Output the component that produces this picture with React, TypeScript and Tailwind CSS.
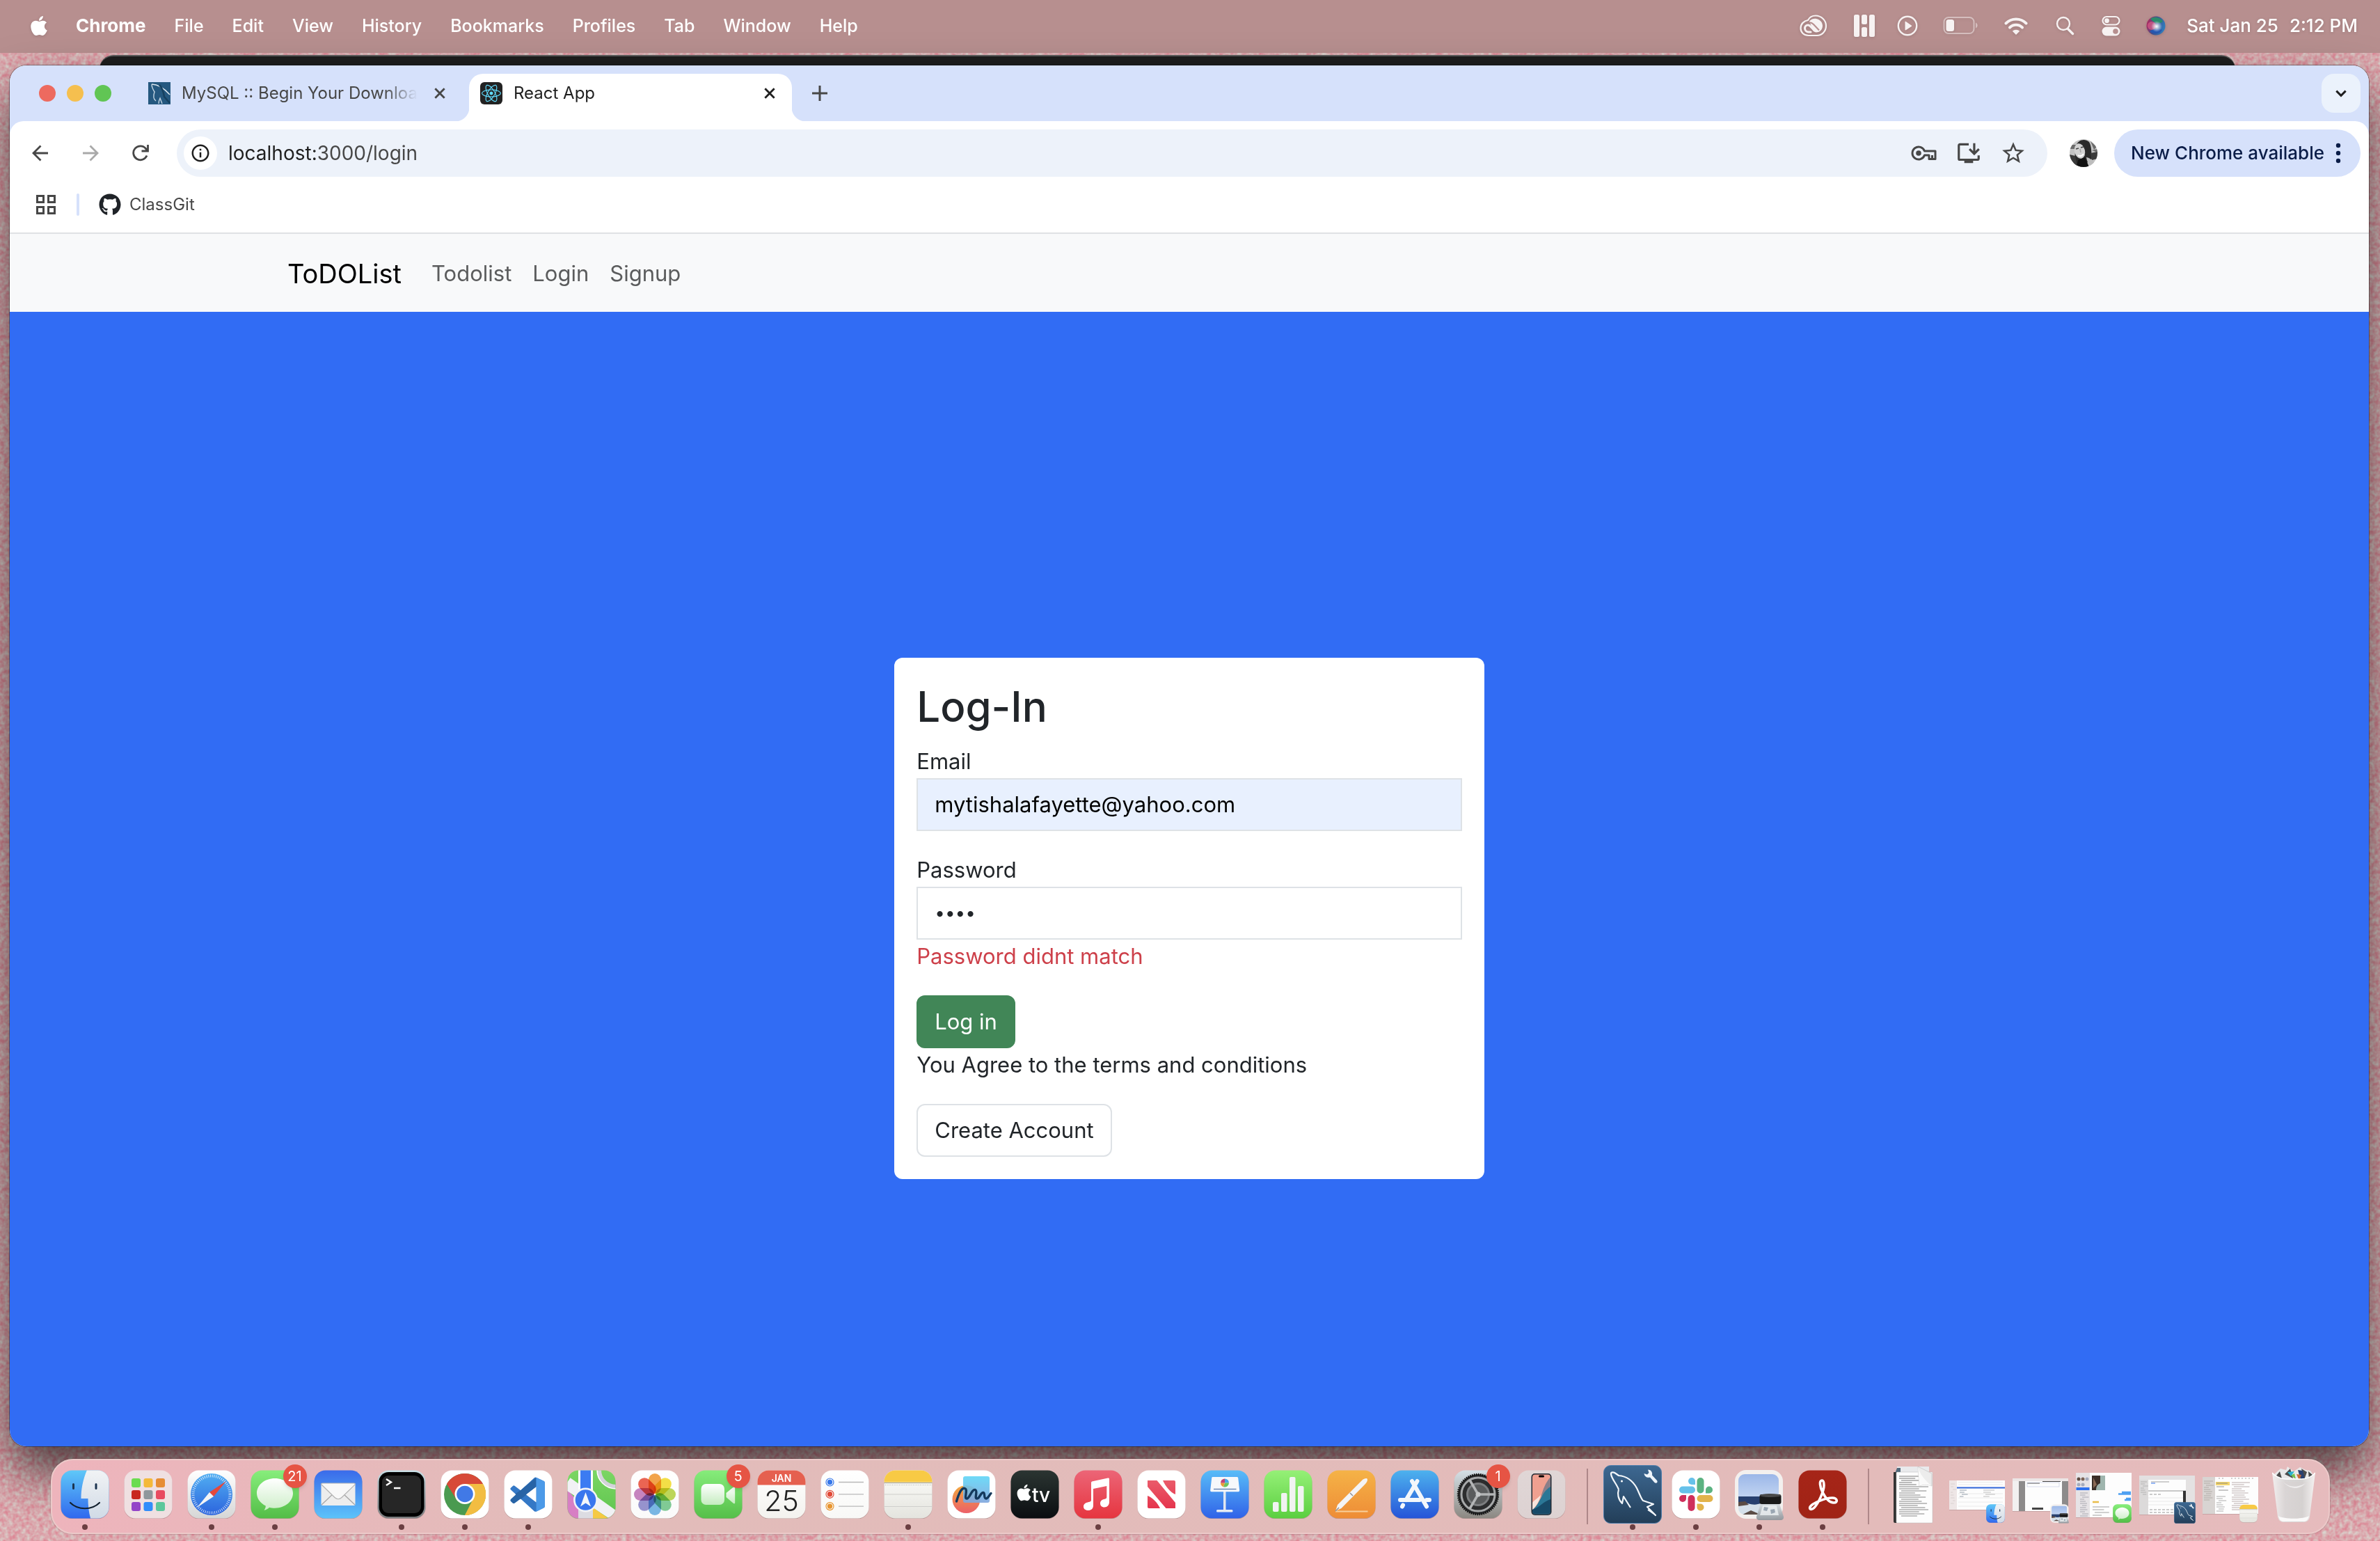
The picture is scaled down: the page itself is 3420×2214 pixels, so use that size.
import type { ReactNode, SVGProps } from "react";
import { FaApple, FaGithub, FaReact } from "react-icons/fa";
import { MdInstallDesktop, MdStarOutline, MdInfoOutline } from "react-icons/md";

type IconProps = SVGProps<SVGSVGElement>;

/* ---------- shared drawing helpers ---------- */

function Grad({ id, a, b }: { id: string; a: string; b: string }) {
  return (
    <linearGradient id={id} x1="0" y1="0" x2="0" y2="1">
      <stop offset="0" stopColor={a} />
      <stop offset="1" stopColor={b} />
    </linearGradient>
  );
}

function Tile({
  id,
  a,
  b,
  children,
  ...rest
}: IconProps & { id: string; a: string; b: string; children?: ReactNode }) {
  return (
    <svg viewBox="0 0 70 70" width="70" height="70" aria-hidden="true" {...rest}>
      <defs>
        <Grad id={id} a={a} b={b} />
        <clipPath id={id + "-clip"}>
          <rect x="0.5" y="0.5" width="69" height="69" rx="16" />
        </clipPath>
      </defs>
      <rect x="0.5" y="1.5" width="69" height="69" rx="16" fill="#000" opacity="0.18" />
      <rect x="0.5" y="0.5" width="69" height="69" rx="16" fill={`url(#${id})`} />
      <g clipPath={`url(#${id}-clip)`}>{children}</g>
    </svg>
  );
}

/* ---------- dock icons ---------- */

function Finder(p: IconProps) {
  return (
    <Tile id="finder" a="#5fc8f8" b="#3068ee" {...p}>
      <defs>
        <Grad id="finder-r" a="#f1f3f5" b="#d0dae6" />
      </defs>
      <path d="M38 0C32 14 29.500 28 29.500 41h10c0 10 1 20 4 30H70V0Z" fill="url(#finder-r)" />
      <path d="M18.500 20.500v6M51 20.500v6" stroke="#1c3450" strokeWidth="3" strokeLinecap="round" />
      <path d="M14 47c11 11 31 11 42 0" stroke="#12202e" strokeWidth="2.200" fill="none" strokeLinecap="round" />
    </Tile>
  );
}

const padColors = ["#6bdc50", "#f4b93a", "#e68d34", "#c8281f", "#8f979c", "#e84a60", "#9444c8", "#318dfa", "#5cc79c"];

function Launchpad() {
  return (
    <Tile id="launch" a="#efe0e2" b="#efe0e1">
      {padColors.map((c, i) => (
        <rect key={c} x={11 + (i % 3) * 17.5} y={12 + Math.floor(i / 3) * 17} width="13" height="13" rx="3" fill={c} />
      ))}
    </Tile>
  );
}

function Safari() {
  return (
    <Tile id="safari" a="#ffffff" b="#d6d6d6">
      <defs>
        <Grad id="safari-b" a="#51aef2" b="#2b63dd" />
      </defs>
      <circle cx="35" cy="35" r="30" fill="url(#safari-b)" />
      <circle cx="35" cy="35" r="26.500" fill="none" stroke="#fff" strokeOpacity="0.8" strokeWidth="4" strokeDasharray="0.9 1.875" />
      <path d="M56 16 32 32l6 6Z" fill="#e4483c" />
      <path d="M14 54l18-22 6 6Z" fill="#f3f4f6" />
    </Tile>
  );
}

function Messages(p: IconProps) {
  return (
    <Tile id="msg" a="#87ee7c" b="#53bd47" {...p}>
      <defs>
        <Grad id="msg-b" a="#ffffff" b="#cdeec8" />
      </defs>
      <path
        d="M35 12c14.500 0 26 9.400 26 21.300S49.500 54.700 35 54.700c-3 0-5.600-.3-8-1-2 2-4.500 3.500-7.500 4 1.500-1.700 2.300-4 2.300-6.200C14 47.700 9 41 9 33.300 9 21.400 20.500 12 35 12Z"
        fill="url(#msg-b)"
      />
    </Tile>
  );
}

function Mail() {
  return (
    <Tile id="mail" a="#3a6bea" b="#5cc3fa">
      <rect x="10.500" y="19" width="49" height="32" rx="2" fill="#ededed" />
      <path d="M11 50l18-17M59 50 41 33" stroke="#a9a9a9" strokeWidth="1.400" />
      <path d="M10.500 20.500 30 39.500c3 3 7 3 10 0l19.500-19c0-1-.8-1.500-1.800-1.500H12.300c-1 0-1.800.5-1.800 1.500Z" fill="#f8f8f8" stroke="#b3b3b3" strokeWidth="1.200" />
    </Tile>
  );
}

function Terminal() {
  return (
    <Tile id="term" a="#c8dfe6" b="#77797b">
      <rect x="2.500" y="3" width="65" height="64" rx="14" fill="#000" />
      <rect x="7" y="8" width="56" height="54" rx="9" fill="#262626" />
      <path d="M13 13l7 4.500-7 4.500M24 26h9.500" stroke="#fff" strokeWidth="2.400" fill="none" />
    </Tile>
  );
}

function ChromeIcon() {
  return (
    <Tile id="chrome" a="#fff" b="#fff">
      <circle cx="35" cy="35" r="30" fill="#4a9a50" />
      <path d="M35 35 23.300 41.800 9 20A30 30 0 0 1 61 20H35Z" fill="#d74a38" />
      <path d="M9 20 23 42.500 35 35V21.500Z" fill="#d74a38" />
      <path d="M61 20a30 30 0 0 1-26 45l13-23V20Z" fill="#f2bd42" />
      <path d="M35 20h26a30 30 0 0 1-26 45l11.700-23.300Z" fill="#f2bd42" />
      <circle cx="35" cy="34.500" r="14.500" fill="#fff" />
      <circle cx="35" cy="34.500" r="11.800" fill="#4179e6" />
    </Tile>
  );
}

const codePath =
  "M23.15 2.587L18.21.21a1.494 1.494 0 0 0-1.705.29l-9.46 8.63-4.12-3.128a.999.999 0 0 0-1.276.057L.327 7.261A1 1 0 0 0 .326 8.74L3.899 12 .326 15.26a1 1 0 0 0 .001 1.479L1.65 17.94a.999.999 0 0 0 1.276.057l4.12-3.128 9.46 8.63a1.492 1.492 0 0 0 1.704.29l4.942-2.377A1.5 1.5 0 0 0 24 20.06V3.939a1.5 1.5 0 0 0-.85-1.352zm-5.146 14.861L10.826 12l7.178-5.448v10.896z";

function VSCode() {
  return (
    <Tile id="vsc" a="#fff" b="#fff">
      <defs>
        <clipPath id="vsc-r">
          <rect x="18" y="0" width="6" height="24" />
        </clipPath>
        <clipPath id="vsc-t">
          <path d="M0 24V14L7 9l11-9v6.500L4 18Z" />
        </clipPath>
      </defs>
      <g transform="translate(9.500 10.500) scale(2.060)">
        <path d={codePath} fill="#3478c6" />
        <path d={codePath} fill="#2864a6" clipPath="url(#vsc-t)" />
        <path d={codePath} fill="#4c9ae8" clipPath="url(#vsc-r)" />
      </g>
    </Tile>
  );
}

function Maps() {
  return (
    <Tile id="maps" a="#7bd663" b="#5fc44f">
      <path d="M0 28 38 70H0Z" fill="#d77fc4" />
      <path d="M0 8 70 58v18L0 30Z" fill="#f1f1f5" />
      <path d="M37 70V54L60 70Z" fill="#f6c944" />
      <path d="M0 18 12 0H0Z" fill="#7bd663" />
      <path d="M16 40h21v32H16Z" fill="#dcdce2" />
      <path d="M16-2h21v34H16Z" fill="#fff" />
      <path d="M19-2h15v34H19Z" fill="#3b7bf2" />
      <circle cx="70" cy="0" r="24" fill="none" stroke="#d3d3da" strokeWidth="6" />
      <circle cx="70" cy="0" r="27" fill="none" stroke="#fff" strokeWidth="1.500" />
      <circle cx="26.500" cy="43" r="17.500" fill="#f1f3f6" />
      <circle cx="26.500" cy="43" r="14.800" fill="#3a76ee" />
      <path d="M26.500 32 34 52.500l-7.500-5-7.500 5Z" fill="#f4f6fa" />
    </Tile>
  );
}

const petals = ["#f19a37", "#f2dc33", "#b5d147", "#72c48a", "#6aaee0", "#8b87c8", "#c077b8", "#e85440"];

function Photos() {
  return (
    <Tile id="photos" a="#fff" b="#fafafa">
      {petals.map((c, i) => (
        <rect
          key={c}
          x="26"
          y="5"
          width="18"
          height="29"
          rx="9"
          fill={c}
          fillOpacity="0.9"
          transform={`rotate(${i * 45} 35 35)`}
          className="mix-blend-multiply"
        />
      ))}
    </Tile>
  );
}

function FaceTime() {
  return (
    <Tile id="ft" a="#86ec7b" b="#55bf49">
      <defs>
        <Grad id="ft-b" a="#ffffff" b="#c4ecbf" />
      </defs>
      <rect x="10.500" y="20" width="33.500" height="30" rx="7" fill="url(#ft-b)" />
      <path d="M46.500 33 57 24.500c1-.7 2.200 0 2.200 1v21.500c0 1.200-1.200 1.700-2.200 1L46.500 39Z" fill="url(#ft-b)" />
    </Tile>
  );
}

function Calendar() {
  return (
    <Tile id="cal" a="#fff" b="#f3f2ee">
      <rect width="70" height="21.500" fill="#e5604f" />
      <text x="35" y="17" textAnchor="middle" fill="#fff" fontSize="14" fontWeight="600" fontFamily="Inter, sans-serif">
        JAN
      </text>
      <text x="35" y="58.500" textAnchor="middle" fill="#222" fontSize="41" fontWeight="300" fontFamily="Inter, sans-serif">
        25
      </text>
    </Tile>
  );
}

function Reminders() {
  return (
    <Tile id="rem" a="#fff" b="#f8f8f6">
      {["#3677ea", "#e14a38", "#e8952f"].map((c, i) => (
        <g key={c}>
          <circle cx="13.500" cy={17.500 + i * 17.300} r="5.500" fill="none" stroke={c} strokeWidth="1.200" />
          <circle cx="13.500" cy={17.500 + i * 17.300} r="3.700" fill={c} />
          <path d={`M26 ${17.5 + i * 17.3}h36`} stroke="#b9b9b9" strokeWidth="1.300" />
        </g>
      ))}
    </Tile>
  );
}

function Notes(p: IconProps) {
  return (
    <Tile id="notes" a="#fdfdfb" b="#e4e4de" {...p}>
      <rect width="70" height="17.500" fill="#f8ca45" />
      <path d="M0 18.500h70" stroke="#9d9a8f" strokeWidth="1.200" />
      <path d="M2 21.500h68" stroke="#b5b5b0" strokeWidth="1.200" strokeDasharray="1 1.500" />
      <path d="M0 35h70M0 52.500h70" stroke="#cfcfcc" strokeWidth="1.200" />
    </Tile>
  );
}

function Freeform() {
  return (
    <Tile id="free" a="#fff" b="#fff">
      <defs>
        <Grad id="free-o" a="#f2a93f" b="#ec5f68" />
        <Grad id="free-c" a="#5fd6f7" b="#7fa5dd" />
      </defs>
      <circle cx="27.500" cy="42" r="20" fill="url(#free-o)" />
      <rect x="23" y="9" width="38" height="38" rx="3" fill="url(#free-c)" fillOpacity="0.9" />
      <path
        d="M13.500 45C17 33 21 25 25.500 26.500c5 1.700-2 15 3 14.500 4-.5 7-14 12-12.500 4 1.500-2 12.500 2.500 12.500 4 0 5-9 9-8.500 3 .5 0 8.500 4 8.500 2.500 0 4-4 7-7.500"
        fill="none"
        stroke="#14395c"
        strokeWidth="3.400"
        strokeLinecap="round"
      />
    </Tile>
  );
}

function AppleTV() {
  return (
    <Tile id="tv" a="#2b3532" b="#0a0d10">
      <FaApple x="6" y="19" size={27} color="#fff" />
      <text x="31" y="45.500" fill="#fff" fontSize="28" fontWeight="500" fontFamily="Inter, sans-serif">
        tv
      </text>
    </Tile>
  );
}

function Music() {
  return (
    <Tile id="music" a="#ec6577" b="#e6353f">
      <path
        d="M25 18.500c0-1.300.7-2 2-2.300l22-4.700c1.300-.3 2 .3 2 1.500V46c0 4.500-3 7.500-7 7.500s-6-2.500-6-5.500c0-3.700 2.500-5.500 6.500-6.300 2-.4 2.800-1 2.800-2.700V23L28 27v24c0 4.500-3 7-7.500 7-4 0-6.500-2.300-6.500-5.500 0-3.500 2.500-5.300 6.500-6.200 3.500-.8 4.500-1.300 4.500-3.300Z"
        fill="#fff"
      />
    </Tile>
  );
}

function News() {
  return (
    <Tile id="news" a="#fff" b="#fff">
      <defs>
        <Grad id="news-r" a="#ea5b6a" b="#e5354d" />
      </defs>
      <path d="M15 15h13.500L55 47v8H41.500L15 24Z" fill="url(#news-r)" />
      <path d="M37 15h16c1.200 0 2 .8 2 2v18C48 32 41 24 37 15ZM15 37c8 3 14 10 18 18H17c-1.200 0-2-.8-2-2Z" fill="url(#news-r)" />
    </Tile>
  );
}

function Keynote() {
  return (
    <Tile id="key" a="#58bcf8" b="#3062e8">
      <rect x="33" y="30" width="3.500" height="29" fill="#e1e7f0" />
      <rect x="23" y="57" width="23.500" height="3.500" rx="1.500" fill="#e6ebf3" />
      <path d="M17.500 10h35c1 0 1.500.6 1.700 1.500l2 17.500c0 1.500-.7 2.200-2 2.200H16c-1.300 0-2-.7-1.800-2.200l2-17.500c.1-.9.600-1.500 1.300-1.500Z" fill="#f6f8fb" />
      <path d="M19 27.500h32.500" stroke="#6c87b5" strokeWidth="1.500" />
      <path d="M35 18.500v-6a6 6 0 0 1 6 6Z" fill="#4aa8e8" />
      <path d="M35 18.500h6a6 6 0 0 1-8 5.700Z" fill="#6cc35c" />
      <path d="M35 18.500 33 24.200a6 6 0 0 1-4-5.700Z" fill="#eb9a37" />
      <path d="M35 18.500h-6a6 6 0 0 1 6-6Z" fill="#c34376" />
    </Tile>
  );
}

function Numbers() {
  return (
    <Tile id="num" a="#95f077" b="#5bcf40">
      {[
        [13, 46, 14],
        [25, 33, 27],
        [37, 10, 50],
        [49, 23, 37],
      ].map(([x, y, h]) => (
        <rect key={x} x={x} y={y} width="8.500" height={h} rx="2" fill="#f1f3f1" />
      ))}
    </Tile>
  );
}

function Pages() {
  return (
    <Tile id="pages" a="#f5b347" b="#ee8c36">
      <path d="M12 59.500h46.500" stroke="#f8cf9c" strokeWidth="2.200" />
      <path d="M12 59l3-9L50 15c3-3 6.500-3.500 7.500-2.500s.5 4.500-2.500 7.500L20.500 55Z" fill="#f4f4f5" />
      <path d="M33 33l4 4M12 59l5-5" stroke="#8f8f94" strokeWidth="1.500" />
    </Tile>
  );
}

function AppStore() {
  return (
    <Tile id="as" a="#4db2ee" b="#2654d8">
      <g stroke="#f4f7fb" strokeWidth="6" strokeLinecap="round">
        <path d="M31 16 52 52.500" />
        <path d="M38.500 16 22.500 43" />
        <path d="M18 50.500 17 52.500" />
        <path d="M14 43h28M52 43h4" />
      </g>
    </Tile>
  );
}

function Settings() {
  return (
    <Tile id="set" a="#d5e0e6" b="#8b8781">
      <circle cx="35" cy="35" r="29" fill="#2c2d2e" />
      <circle cx="35" cy="35" r="28.500" fill="none" stroke="#111" strokeWidth="3.500" strokeDasharray="1.500 1.480" />
      <circle cx="35" cy="35" r="24" fill="none" stroke="#a7a9aa" strokeWidth="3" />
      <circle cx="35" cy="35" r="15.500" fill="#5a5c5d" stroke="#7c7e80" strokeWidth="3" />
      <path d="M35 35h24M35 35 23 14.500M35 35 23 55.500" stroke="#b3b5b6" strokeWidth="3.500" />
      <circle cx="35" cy="35" r="3.500" fill="#c5c7c8" />
    </Tile>
  );
}

function IPhone() {
  return (
    <Tile id="ip" a="#e0d6d6" b="#ddd2d2">
      <rect x="20.500" y="5" width="29" height="60" rx="5" fill="#222a33" />
      <rect x="22" y="6.500" width="26" height="57" rx="4" fill="#f0a090" />
      <path d="M48 10v17C42 30 37 34 34 40c3-12 7-22 14-30Z" fill="#8b7e88" />
      <path d="M48 24v35.500a4 4 0 0 1-4 4H26a4 4 0 0 1-4-4V57C33 50 34 32 48 24Z" fill="#2b7796" />
      <path d="M48 42v17.500a4 4 0 0 1-4 4H26a4 4 0 0 1-4-4V57c10-3 16-12 26-15Z" fill="#184a68" />
      <path d="M22 57c7-6 10-13 12-21-5 5-10 8-12 11Z" fill="#f8e4dc" />
      <rect x="31" y="7.500" width="8" height="3" rx="1.500" fill="#000" />
    </Tile>
  );
}

function Workbench(p: IconProps) {
  return (
    <svg viewBox="0 0 84 84" width="84" height="84" aria-hidden="true" {...p}>
      <defs>
        <Grad id="wb" a="#3d6892" b="#233e58" />
      </defs>
      <rect x="0.500" y="0.500" width="83" height="83" rx="10" fill="url(#wb)" stroke="#4c7dac" />
      <path
        d="M22 35C19 27 12 20 11 13c-.5-3 3-3.500 6-1.500l5 3.500c12 1 20 7 26 18 4 8 6 15 9 18l15 5-9 4 12 12c-4-3-7-6-11-8M22 35c-2 6-1 14 5 20l2-10 10 16"
        fill="none"
        stroke="#f3f7fb"
        strokeWidth="2.200"
        strokeLinejoin="round"
      />
      <circle cx="26.500" cy="23" r="1.500" fill="#fff" />
      <path d="M64 6.500c4 0 7 3.500 6 8l7 7.500c2 3-1.500 5-3.500 3L67 17.500c-4 1-8-1-8.500-5.500l4.500 1.500 2.500-2.500Z" fill="#eef5fb" />
    </svg>
  );
}

function Slack() {
  return (
    <Tile id="slack" a="#fff" b="#fff">
      <path d="M29 21h5v-5a5 5 0 1 0-5 5Z" fill="#66c1ea" />
      <rect x="11" y="23.500" width="23" height="10" rx="5" fill="#66c1ea" />
      <rect x="36.500" y="11" width="10" height="22.500" rx="5" fill="#5bb381" />
      <path d="M49 28.500v5h5a5 5 0 1 0-5-5Z" fill="#5bb381" />
      <path d="M21 41v-5h-5a5 5 0 1 0 5 5Z" fill="#cf2f5b" />
      <rect x="23.500" y="36" width="10" height="23" rx="5" fill="#cf2f5b" />
      <rect x="36.500" y="36" width="23" height="10" rx="5" fill="#e2b34b" />
      <path d="M41.500 48.500h-5v5a5 5 0 1 0 5-5Z" fill="#e2b34b" />
    </Tile>
  );
}

function Preview(p: IconProps) {
  return (
    <svg viewBox="0 0 76 76" width="76" height="76" aria-hidden="true" {...p}>
      <defs>
        <Grad id="pv-s" a="#9bb7e8" b="#c3d5f2" />
        <Grad id="pv-g" a="#d9dee2" b="#8d959b" />
        <clipPath id="pv-c">
          <rect x="8" y="9" width="58" height="58" rx="9" />
        </clipPath>
      </defs>
      <rect x="3" y="3" width="69" height="70" rx="16" fill="#f3f0ee" />
      <g clipPath="url(#pv-c)">
        <rect x="8" y="9" width="58" height="34" fill="url(#pv-s)" />
        <rect x="8" y="41" width="58" height="12" fill="#28406f" />
        <path d="M8 51c9-4 18 4 28 1s20 0 30 0v16H8Z" fill="#d5e0ea" />
        <path d="M8 49l10-1 5 5-15 2ZM14 67l12-6 14 6Z" fill="#5b4c45" />
      </g>
      <path d="M40 51h27l6 19c.5 3-1 5-4 5H38c-3 0-4.500-2-4-5Z" fill="url(#pv-g)" opacity="0.92" />
      <path d="M43 54h20l3 14H39Z" fill="#eef1f3" opacity="0.8" />
      <path d="M45 56l6 1-2 5-5-1ZM54 60l6-1 1 5-6 2Z" fill="#9aa6b2" />
      <rect x="38.500" y="38" width="31" height="14" rx="3" fill="#1a1a1a" />
      <ellipse cx="54" cy="39.500" rx="15" ry="2.500" fill="#4a4a4a" />
    </svg>
  );
}

function Acrobat() {
  return (
    <Tile id="acro" a="#a62518" b="#a02315">
      <path
        d="M34 15c-4 0-3 9 1 17s10 15 16 15c7 0 5-7-2-7-11 0-29 8-32 13-2 4 3 5 7 0 5-6 13-22 13-31 0-4-1-7-3-7Z"
        fill="none"
        stroke="#fff"
        strokeWidth="3.600"
        strokeLinejoin="round"
      />
    </Tile>
  );
}

function TextRows({ x, y, w, n, step = 3, color = "#9a9a9a" }: { x: number; y: number; w: number; n: number; step?: number; color?: string }) {
  return (
    <g stroke={color} strokeWidth="0.800">
      {Array.from({ length: n }, (_, i) => (
        <path key={i} d={`M${x + (i % 4 === 2 ? 3 : 0)} ${y + i * step}h${w - ((i * 7) % 11) * (w / 22)}`} />
      ))}
    </g>
  );
}

function DocStack() {
  return (
    <svg viewBox="0 0 58 84" width="58" height="84" aria-hidden="true">
      <rect x="5" y="2" width="46" height="80" fill="#e9eaec" />
      <path d="M5 4h5v8H2Z" fill="#516a7c" />
      <path d="M0 10h5v73H2c-1 0-2-1-2-2Z" fill="#333" />
      <rect x="4" y="10" width="52" height="73" rx="1" fill="#fdfdfd" stroke="#bbb" strokeWidth="0.500" />
      <TextRows x={8} y={16} w={34} n={5} color="#555" />
      <TextRows x={8} y={31} w={42} n={15} color="#666" />
      <path d="M35 2 55 12v18c-7-3-14-2-18 0Z" fill="#ececec" stroke="#c2c2c2" strokeWidth="0.700" />
      <path d="M35 2c2 10 10 20 20 28-7-3-14-2-18 0Z" fill="#fafafa" />
    </svg>
  );
}

function Thumb({ y, h, children }: { y: number; h: number; children: ReactNode }) {
  return (
    <svg viewBox="0 0 82 84" width="82" height="84" aria-hidden="true">
      <rect x="1" y={y + 1} width="80" height={h} fill="#000" opacity="0.120" />
      <rect x="1" y={y} width="80" height={h} fill="#fdfdfd" />
      {children}
    </svg>
  );
}

function FinderThumb() {
  return (
    <Thumb y={22} h={42}>
      <rect x="1" y="22" width="11" height="42" fill="#eee6e6" />
      <TextRows x={3} y={27} w={6} n={8} step={4} color="#d4cccc" />
      <path d="M14 24.500h64M14 28h64M14 41h64M14 47h64M14 53h64M14 59h64" stroke="#e4e4e4" strokeWidth="0.800" />
      <rect x="12" y="31.500" width="69" height="2" fill="#2f64d8" />
      <TextRows x={16} y={36} w={10} n={4} color="#7a8694" />
      <TextRows x={50} y={36} w={16} n={4} color="#aaa" />
      <Finder x="54" y="56" width="27" height="27" />
    </Thumb>
  );
}

function PreviewThumb() {
  return (
    <Thumb y={19} h={47}>
      <rect x="1" y="19" width="80" height="4" fill="#ece6e6" />
      <rect x="1" y="23" width="9" height="43" fill="#f2f0f0" />
      <rect x="10" y="23" width="9" height="43" fill="#8d8b8b" />
      <rect x="72" y="23" width="9" height="43" fill="#8d8b8b" />
      <path d="M44 23.500h26M22 26h18" stroke="#444" strokeWidth="1" />
      <rect x="22" y="25" width="46" height="6" fill="none" stroke="#c8cfe4" strokeWidth="0.700" />
      <rect x="29" y="61" width="16" height="3" fill="#444" />
      <Preview x="54" y="55" width="29" height="29" />
    </Thumb>
  );
}

function MessagesThumb() {
  return (
    <Thumb y={11} h={64}>
      <rect x="1" y="11" width="20" height="64" fill="#e6e3e6" />
      <circle cx="5" cy="20" r="2.500" fill="#5e4d44" />
      <circle cx="11" cy="20" r="2.500" fill="#7b6355" />
      <circle cx="17" cy="20" r="2.500" fill="#a4abbd" />
      <circle cx="5" cy="28" r="2.500" fill="#a4abbd" />
      <circle cx="11" cy="28" r="2.500" fill="#a4abbd" />
      <rect x="1.500" y="32" width="19" height="4" fill="#2f71ee" />
      <TextRows x={7} y={40} w={11} n={12} color="#9b9aa2" />
      <rect x="24" y="15" width="19" height="21" fill="#3c2f28" />
      <path d="M36 15h7v21H30c0-6 2-8 6-10Z" fill="#9fb5ae" />
      <path d="M26 18l5 10-5 5Z" fill="#8a6a55" />
      <path d="M67 39h13M62 41.500h18M73 48h7M71 50h9" stroke="#4ea0f2" strokeWidth="2.400" />
      <path d="M25 53h9" stroke="#e9bd4a" strokeWidth="2.500" />
      <TextRows x={25} y={60} w={24} n={4} step={4} color="#888" />
      <Messages x="54" y="56" width="27" height="27" />
    </Thumb>
  );
}

function WorkbenchThumb() {
  return (
    <Thumb y={15} h={56}>
      <rect x="1" y="15" width="80" height="6" fill="#e3e0e1" />
      <rect x="1" y="21" width="13" height="50" fill="#dcdada" />
      <rect x="68" y="21" width="13" height="50" fill="#e4e2e2" />
      <TextRows x={3} y={24} w={9} n={7} color="#aaa" />
      <path d="M18 24h26" stroke="#888" strokeWidth="0.800" />
      <path d="M18 26h6" stroke="#2f71ee" strokeWidth="1" />
      <rect x="14" y="36" width="54" height="2" fill="#c9c9c9" />
      <path d="M16 42h16M16 64h34M16 68h34" stroke="#999" strokeWidth="1" strokeDasharray="4 2" />
      <path d="M14 47h50M14 52h50M14 57h50" stroke="#e3e3e3" strokeWidth="0.800" />
      <rect x="64" y="37" width="4" height="22" fill="#333" />
      <Workbench x="51" y="53" width="31" height="31" />
    </Thumb>
  );
}

function NotesThumb() {
  return (
    <Thumb y={17} h={53}>
      <rect x="1" y="17" width="18" height="53" fill="#d8d4d2" />
      <TextRows x={3} y={23} w={13} n={10} color="#a9a29c" />
      <rect x="20" y="24" width="20" height="5" fill="#f3d66f" />
      <TextRows x={21} y={26} w={16} n={3} step={5} color="#777" />
      <TextRows x={21} y={45} w={13} n={8} color="#999" />
      <path d="M24 19h10M42 19h34" stroke="#999" strokeWidth="0.900" strokeDasharray="2 3" />
      <TextRows x={43} y={25} w={26} n={14} color="#a99" />
      <Notes x="54" y="56" width="26" height="27" />
    </Thumb>
  );
}

function Trash() {
  return (
    <svg viewBox="0 0 62 82" width="62" height="82" aria-hidden="true">
      <defs>
        <linearGradient id="trash" x1="0" x2="1">
          <stop offset="0" stopColor="#f3f0f0" />
          <stop offset="0.300" stopColor="#d9d6d6" />
          <stop offset="0.700" stopColor="#d4d2d1" />
          <stop offset="1" stopColor="#f6f4f4" />
        </linearGradient>
      </defs>
      <path d="M3 12 12 4l8 2 2-5 9 7 9-6 8 4 7 1 4 6-6 10H8Z" fill="#e9e9e9" />
      <path d="M6 14 11 8l3 10ZM18 12l8-8 4 14ZM42 4l8 5-4 11ZM52 8l6 5-5 7Z" fill="#4c4c4c" />
      <path d="M22 9l10-1-5 7Z" fill="#2bb3cf" />
      <path d="M27 14l5-3 2 8Z" fill="#73c04e" />
      <path d="M37 6l7 1 3 12-6 1Z" fill="#28416f" />
      <path d="M35 12l7 1-3 8Z" fill="#c96a3b" />
      <path d="M0 10c4 5 12 9 20 9h22c8 0 16-4 20-9l-8 63c-.8 5-4 8-9 8H17c-5 0-8-3-9-8Z" fill="url(#trash)" fillOpacity="0.960" />
      <path d="M0 10c4 5 12 9 20 9h22c8 0 16-4 20-9" stroke="#fff" strokeWidth="1.500" fill="none" />
      <path d="M16 23c8 8 20 9 32 2-8 9-22 10-32-2Z" fill="#efeded" />
      <path d="M9 72c8 5 36 5 44 0l-1 3c-1 3-3 5-7 5H17c-4 0-6-2-7-5Z" fill="#faf9f9" />
    </svg>
  );
}

/* ---------- menu bar icons ---------- */

function CreativeCloud() {
  return (
    <svg viewBox="0 0 40 32" width="40" height="32" fill="none" aria-hidden="true">
      <path d="M13 30C6 30 1.500 25.500 1.500 19.500S6 9 12 8c2-4 6.500-6.500 11-6.500C31 1.500 38 8 38 16s-6 14-13 14Z" stroke="#f7f2f2" strokeWidth="2.200" />
      <path d="M21 22.500 14.500 16c-3-2.500-7 0-7 3.500 0 3.200 2.500 5.500 5.500 5.500h3" stroke="#f7f2f2" strokeWidth="3" strokeLinecap="round" />
      <path d="M14 9.500C17 6 21 5.500 24 6c5 .8 9 5 9 10 0 5.500-4 9.500-9 9.500-2 0-3.500-1-5-2.500" fill="#f7f2f2" />
      <path d="M13 11.500c3-.5 5 .5 7 2.500l8 8.500" stroke="#b78f8f" strokeWidth="2.200" />
    </svg>
  );
}

function Columns() {
  return (
    <svg viewBox="0 0 30 32" width="30" height="32" fill="#f7f2f2" aria-hidden="true">
      <rect width="8" height="32" rx="2.500" />
      <rect x="11" width="8" height="14" rx="2.500" />
      <rect x="11" y="18" width="8" height="14" rx="2.500" />
      <rect x="22" width="8" height="32" rx="2.500" />
    </svg>
  );
}

function PlayCircle() {
  return (
    <svg viewBox="0 0 30 30" width="30" height="30" aria-hidden="true">
      <circle cx="15" cy="15" r="13.200" fill="none" stroke="#f7f2f2" strokeWidth="2.400" />
      <path d="M11.500 9.500v11c0 .8.600 1 1.200.7l8-5.300c.6-.4.6-1 0-1.400l-8-5.500c-.6-.4-1.200-.2-1.200.5Z" fill="#f7f2f2" />
    </svg>
  );
}

function Battery() {
  return (
    <svg viewBox="0 0 52 28" width="52" height="28" aria-hidden="true">
      <rect x="1.500" y="2" width="43" height="23" rx="6.500" fill="none" stroke="#f7f2f2" strokeOpacity="0.500" strokeWidth="2" />
      <rect x="4.500" y="5" width="11.500" height="17" rx="3.500" fill="#f7f2f2" />
      <path d="M47 9.500c3.500 1.500 3.500 6.500 0 8Z" fill="#f7f2f2" fillOpacity="0.500" />
    </svg>
  );
}

function Wifi() {
  return (
    <svg viewBox="0 0 34 26" width="34" height="26" fill="none" aria-hidden="true">
      <path d="M2.500 9.500c8-8 21-8 29 0" stroke="#f7f2f2" strokeWidth="4" strokeLinecap="round" />
      <path d="M8 15.500c5-5 13-5 18 0" stroke="#f7f2f2" strokeWidth="4" strokeLinecap="round" />
      <path d="M17 26l-5.200-5.200c2.500-2.800 7.900-2.800 10.400 0Z" fill="#f7f2f2" />
    </svg>
  );
}

function Search() {
  return (
    <svg viewBox="0 0 28 28" width="28" height="28" fill="none" aria-hidden="true">
      <circle cx="11" cy="11" r="9" stroke="#f7f2f2" strokeWidth="2.400" />
      <path d="M17.500 18.500l7 7" stroke="#f7f2f2" strokeWidth="3.400" strokeLinecap="round" />
    </svg>
  );
}

function ControlCenter() {
  return (
    <svg viewBox="0 0 28 30" width="28" height="30" aria-hidden="true">
      <rect x="1.500" y="2" width="24" height="11.500" rx="5.750" fill="none" stroke="#f7f2f2" strokeWidth="2.200" />
      <circle cx="7.500" cy="7.700" r="3.400" fill="#f7f2f2" />
      <rect x="0.500" y="16.500" width="26" height="13" rx="6.500" fill="#f7f2f2" />
      <circle cx="20" cy="23" r="3.800" fill="#b78f8f" />
    </svg>
  );
}

function Siri() {
  return (
    <svg viewBox="0 0 28 28" width="28" height="28" aria-hidden="true">
      <defs>
        <linearGradient id="siri" x1="0" y1="0.300" x2="1" y2="0.600">
          <stop offset="0" stopColor="#b5285c" />
          <stop offset="0.450" stopColor="#3f4f8c" />
          <stop offset="1" stopColor="#2e7fc0" />
        </linearGradient>
        <radialGradient id="siri-w">
          <stop offset="0" stopColor="#fff" />
          <stop offset="1" stopColor="#fff" stopOpacity="0" />
        </radialGradient>
      </defs>
      <circle cx="14" cy="14" r="13.500" fill="url(#siri)" />
      <path d="M6 4c5-4 14-3 18 4-5 4-12 3-18-4Z" fill="#2b8a6c" />
      <circle cx="8" cy="14" r="6" fill="#e05a86" opacity="0.700" />
      <path d="M5 22c6 5 14 4 18-2-6-2-12-2-18 2Z" fill="#2557b0" />
      <circle cx="15" cy="15" r="8" fill="url(#siri-w)" />
    </svg>
  );
}

/* ---------- browser icons ---------- */

function Stroke({ d, size = 24, color = "#474747", w = 3 }: { d: string; size?: number; color?: string; w?: number }) {
  return (
    <svg viewBox="0 0 24 24" width={size} height={size} fill="none" stroke={color} strokeWidth={w} aria-hidden="true">
      <path d={d} />
    </svg>
  );
}

function MySqlFavicon() {
  return (
    <svg viewBox="0 0 32 32" width="32" height="32" className="shrink-0" aria-hidden="true">
      <rect width="32" height="32" fill="#25587f" />
      <path d="M5 3c9 0 17 5 26 15" stroke="#dfe9f0" strokeWidth="1.600" fill="none" />
      <path d="M5 3c0 5 2 8 4 11-2 6-1 11 2 13M15 31c0-4 1-6 2-8l3 8" stroke="#c3d5e2" strokeWidth="1.400" fill="none" />
      <path d="M16 4c4 4 6 10 7 17l8 9" stroke="#16405f" strokeWidth="2.500" fill="none" />
    </svg>
  );
}

function KeyIcon() {
  return (
    <svg viewBox="0 0 38 22" width="38" height="22" fill="none" stroke="#474747" strokeWidth="3" aria-hidden="true">
      <path d="M19.500 8A9 9 0 1 0 19.500 14H26v5.500h9V8Z" strokeLinejoin="round" />
      <path d="M30.500 19v-5" />
      <circle cx="11" cy="11" r="3.800" fill="#474747" stroke="none" />
    </svg>
  );
}

function Avatar() {
  return (
    <svg viewBox="0 0 40 40" width="40" height="40" aria-hidden="true">
      <defs>
        <clipPath id="avatar">
          <circle cx="20" cy="20" r="20" />
        </clipPath>
      </defs>
      <g clipPath="url(#avatar)">
        <rect width="40" height="40" fill="#c4c4c4" />
        <path d="M0 8h10v6H0ZM30 3l9 8-4 4ZM32 16l8-2v5Z" fill="#6b6b6b" />
        <path d="M9 10C11 1 22-2 28 4c4 6 3 16 4 24l-12 10H6l1-10Z" fill="#2a2a2a" />
        <ellipse cx="14.500" cy="17" rx="7.500" ry="11" fill="#d2d2d2" transform="rotate(-14 14.500 17)" />
        <path d="M9 14l4-1M16 12l4-1" stroke="#444" strokeWidth="1.500" />
        <path d="M15 14l1 5" stroke="#a5a5a5" strokeWidth="1.500" />
        <path d="M12 23c3 2 6 1 8-2" stroke="#fff" strokeWidth="2" fill="none" />
        <path d="M0 22l8 2 3 16H0ZM30 20l10-2v10l-8 2Z" fill="#3a3a3a" />
        <path d="M12 30l10-4 6 14H10Z" fill="#111" />
        <path d="M24 26c4 0 8 4 12 8l-6 6c-3-4-5-8-6-14Z" fill="#bdbdbd" />
      </g>
    </svg>
  );
}

/* ---------- page sections ---------- */

const menus = ["File", "Edit", "View", "History", "Bookmarks", "Profiles", "Tab", "Window", "Help"];

function MenuBar() {
  return (
    <header className="flex h-[76px] shrink-0 items-center justify-between bg-[#b78f8f] pr-8 pb-[2px] pl-10 leading-8 font-medium text-white">
      <nav className="flex items-center gap-[41px] text-[25px] [text-shadow:0_3px_6px_rgba(0,0,0,0.25)]">
        <button className="-mr-1 drop-shadow-sm" aria-label="Apple menu">
          <FaApple size={32} />
        </button>
        <button className="text-[26px] font-bold">Chrome</button>
        {menus.map((m) => (
          <button key={m}>{m}</button>
        ))}
      </nav>
      <div className="flex items-center text-[26px] drop-shadow-sm">
        <div className="flex items-center">
          <span className="mr-[38px]"><CreativeCloud /></span>
          <span className="mr-8"><Columns /></span>
          <span className="mr-9"><PlayCircle /></span>
          <span className="mr-9"><Battery /></span>
          <span className="mr-10"><Wifi /></span>
          <span className="mr-[38px]"><Search /></span>
          <span className="mr-9"><ControlCenter /></span>
          <span className="mr-[30px]"><Siri /></span>
        </div>
        <time className="flex gap-4 whitespace-nowrap">
          <span>Sat Jan 25</span>
          <span>2:12 PM</span>
        </time>
      </div>
    </header>
  );
}

function CloseX({ color }: { color: string }) {
  return <Stroke d="M4 4 20 20M20 4 4 20" size={20} color={color} w={3.400} />;
}

function TabStrip() {
  return (
    <div className="flex h-20 items-end pr-3 pl-[42px]">
      <div className="mb-7 flex gap-4">
        <button aria-label="Close window" className="size-6 rounded-full bg-[#ed6a5f]" />
        <button aria-label="Minimize window" className="size-6 rounded-full bg-[#f5bf4f]" />
        <button aria-label="Zoom window" className="size-6 rounded-full bg-[#61c554]" />
      </div>
      <div className="ml-[37px] flex h-[68px] w-[464px] items-center gap-4 px-4 pb-3 text-2xl leading-8 text-[#474747]">
        <MySqlFavicon />
        <span className="flex-1 whitespace-nowrap [mask-image:linear-gradient(to_right,black_86%,transparent)]">
          MySQL :: Begin Your Downloa
        </span>
        <button aria-label="Close tab" className="px-[6px]">
          <CloseX color="#474747" />
        </button>
      </div>
      <div className="relative ml-[13px] flex h-[68px] w-[464px] items-center gap-4 rounded-t-[20px] bg-white px-4 pb-3 text-2xl leading-8 text-[#1f1f1f]">
        <span className="absolute bottom-0 -left-5 size-5 bg-[radial-gradient(circle_at_0_0,transparent_20px,white_21px)]" />
        <span className="absolute -right-5 bottom-0 size-5 bg-[radial-gradient(circle_at_100%_0,transparent_20px,white_21px)]" />
        <span className="flex size-8 items-center justify-center rounded-md bg-[#222]">
          <FaReact size={28} color="#61dafb" />
        </span>
        <span className="flex-1 whitespace-nowrap">React App</span>
        <button aria-label="Close tab" className="px-[6px]">
          <CloseX color="#1f1f1f" />
        </button>
      </div>
      <button aria-label="New tab" className="mb-7 ml-7">
        <Stroke d="M12 1v22M1 12h22" size={24} />
      </button>
      <button aria-label="Search tabs" className="mb-3 ml-auto flex size-14 items-center justify-center rounded-[18px] bg-[#ebf2fc]">
        <Stroke d="M4 8l8 8 8-8" size={20} color="#1f1f1f" w={3.600} />
      </button>
    </div>
  );
}

function Toolbar() {
  return (
    <div className="flex h-[92px] items-center pr-3 pl-8 text-[#474747]">
      <div className="flex items-center gap-12">
        <button aria-label="Back"><Stroke d="M23 12H3M12.500 1.500 2 12l10.500 10.500" w={2.800} /></button>
        <button aria-label="Forward"><Stroke d="M1 12h20M11.500 1.500 22 12 11.500 22.500" color="#a9a9a9" w={2.800} /></button>
        <button aria-label="Reload"><Stroke d="M21 15.500A10 10 0 1 1 19.500 5.500L22 8.500M22.500 0v9h-9" w={2.800} /></button>
      </div>
      <div className="ml-10 flex h-[68px] flex-1 items-center gap-4 rounded-full bg-[#edf2fa] pr-[30px] pl-[10px]">
        <button aria-label="Site information" className="flex size-12 shrink-0 items-center justify-center rounded-full bg-white">
          <MdInfoOutline size={30} color="#1f1f1f" />
        </button>
        <div className="flex-1 text-[28px] leading-10 text-[#474747]">
          <span className="text-[#1f1f1f]">localhost:</span>3000/login
        </div>
        <div className="flex items-center gap-[26px]">
          <button aria-label="Passwords"><KeyIcon /></button>
          <button aria-label="Install app"><MdInstallDesktop size={38} /></button>
          <button aria-label="Bookmark this page"><MdStarOutline size={38} /></button>
        </div>
      </div>
      <button aria-label="Profile" className="mr-6 ml-8"><Avatar /></button>
      <button className="flex h-[68px] items-center gap-4 rounded-full bg-[#d6e1fb] pr-7 pl-6 text-[26px] leading-10 font-medium whitespace-nowrap text-[#0b1d48]">
        New Chrome available
        <svg viewBox="0 0 8 30" width="8" height="30" fill="#0b1d48" aria-hidden="true">
          <circle cx="4" cy="4" r="3.200" />
          <circle cx="4" cy="15" r="3.200" />
          <circle cx="4" cy="26" r="3.200" />
        </svg>
      </button>
    </div>
  );
}

function BookmarksBar() {
  return (
    <div className="flex h-[70px] items-center border-b-2 border-[#dfe1e4] pb-3 pl-[38px] text-[#474747]">
      <button aria-label="Tab groups">
        <svg viewBox="0 0 28 28" width="28" height="28" fill="none" stroke="#474747" strokeWidth="3" aria-hidden="true">
          <path d="M1.500 1.500h9v9h-9ZM17.500 1.500h9v9h-9ZM1.500 17.500h9v9h-9ZM17.500 17.500h9v9h-9Z" />
        </svg>
      </button>
      <span className="ml-[30px] h-8 w-1 rounded-full bg-[#d6e1fb]" />
      <a href="#classgit" className="ml-7 flex items-center gap-3 text-2xl leading-8">
        <FaGithub size={32} color="#1f2328" />
        ClassGit
      </a>
    </div>
  );
}

function LoginPage() {
  return (
    <div className="flex min-h-0 flex-1 flex-col overflow-hidden">
      <nav className="h-28 shrink-0 bg-[#f8f9fa]">
        <div className="mx-auto flex h-full max-w-[2640px] items-center px-6 pt-[2px]">
          <a href="#home" className="mr-7 text-[38px] leading-[60px] text-black">ToDOList</a>
          <a href="#todolist" className="px-[15px] text-[31px] leading-[48px] text-[#5b5c5d]">Todolist</a>
          <a href="#login" className="px-[15px] text-[31px] leading-[48px] text-[#5b5c5d]">Login</a>
          <a href="#signup" className="px-[15px] text-[31px] leading-[48px] text-[#5b5c5d]">Signup</a>
        </div>
      </nav>
      <main className="flex h-full shrink-0 items-center justify-center bg-[#316cf4]">
        <form className="w-1/4 rounded-xl bg-white p-8 text-[31px] leading-[48px] text-[#212529]" onSubmit={(e) => e.preventDefault()}>
          <h2 className="mb-4 text-[60px] leading-[77px] font-medium">Log-In</h2>
          <div className="mb-8">
            <label htmlFor="email" className="block">Email</label>
            <input
              id="email"
              type="email"
              defaultValue="mytishalafayette@yahoo.com"
              className="block h-[76px] w-full border-2 border-[#dee2e6] bg-[#e8f0fe] px-6 text-black"
            />
          </div>
          <div className="mb-8">
            <label htmlFor="password" className="block">Password</label>
            <input
              id="password"
              type="password"
              defaultValue="1234"
              className="block h-[76px] w-full border-2 border-[#dee2e6] bg-white px-6 text-[26px]"
            />
            <span className="block text-[#cd404a]">Password didnt match</span>
          </div>
          <button type="submit" className="block rounded-xl border-2 border-[#418657] bg-[#418657] px-6 py-3 text-white">
            Log in
          </button>
          <p className="mb-8">You Agree to the terms and conditions</p>
          <button type="button" className="block rounded-xl border-2 border-[#dee2e6] bg-white px-6 py-3">
            Create Account
          </button>
        </form>
      </main>
    </div>
  );
}

function DockItem({ children, running, badge }: { children: ReactNode; running?: boolean; badge?: string }) {
  return (
    <div className="relative flex h-full w-[91px] items-center justify-center pb-[6px]">
      {children}
      {badge && (
        <span className="absolute top-[6px] right-0 flex size-[34px] items-center justify-center rounded-full bg-[#e65444] text-[20px] leading-none text-white shadow-md">
          {badge}
        </span>
      )}
      {running && <span className="absolute bottom-1 size-2 rounded-full bg-[#6b3f42]" />}
    </div>
  );
}

function Dock() {
  return (
    <footer className="relative mx-auto mb-[10px] flex h-[108px] shrink-0 items-center rounded-[32px] border-2 border-[#ecc9c9] bg-[linear-gradient(to_right,#eeb4bc,#e2bcba_22%,#e3bbba_80%,#e6bbbd)] pr-1 pl-[2px] shadow-[0_0_2px_rgba(0,0,0,0.4)]">
      <DockItem running><Finder /></DockItem>
      <DockItem><Launchpad /></DockItem>
      <DockItem running><Safari /></DockItem>
      <DockItem running badge="21"><Messages /></DockItem>
      <DockItem><Mail /></DockItem>
      <DockItem running><Terminal /></DockItem>
      <DockItem running><ChromeIcon /></DockItem>
      <DockItem running><VSCode /></DockItem>
      <DockItem><Maps /></DockItem>
      <DockItem><Photos /></DockItem>
      <DockItem badge="5"><FaceTime /></DockItem>
      <DockItem><Calendar /></DockItem>
      <DockItem><Reminders /></DockItem>
      <DockItem running><Notes /></DockItem>
      <DockItem><Freeform /></DockItem>
      <DockItem><AppleTV /></DockItem>
      <DockItem running><Music /></DockItem>
      <DockItem><News /></DockItem>
      <DockItem><Keynote /></DockItem>
      <DockItem><Numbers /></DockItem>
      <DockItem><Pages /></DockItem>
      <DockItem><AppStore /></DockItem>
      <DockItem badge="1"><Settings /></DockItem>
      <DockItem><IPhone /></DockItem>
      <span className="mx-[19px] h-20 w-[2px] bg-[#ae8789]" />
      <DockItem running><Workbench /></DockItem>
      <DockItem running><Slack /></DockItem>
      <DockItem running><Preview /></DockItem>
      <DockItem running><Acrobat /></DockItem>
      <span className="mx-[19px] h-20 w-[2px] bg-[#ae8789]" />
      <DockItem><DocStack /></DockItem>
      <DockItem><FinderThumb /></DockItem>
      <DockItem><PreviewThumb /></DockItem>
      <DockItem><MessagesThumb /></DockItem>
      <DockItem><WorkbenchThumb /></DockItem>
      <DockItem><NotesThumb /></DockItem>
      <DockItem><Trash /></DockItem>
    </footer>
  );
}

function Wallpaper() {
  return (
    <svg className="absolute inset-0 -z-10 h-full w-full" aria-hidden="true">
      <filter id="grain" x="0" y="0" width="100%" height="100%">
        <feTurbulence type="fractalNoise" baseFrequency="0.160" numOctaves="2" seed="4" />
        <feColorMatrix values="0 0 0 0 0.700  0 0 0 0 0.650  0 0 0 0 0.610  1.600 0 0 0 -0.350" />
      </filter>
      <rect width="100%" height="100%" fill="#dc8896" />
      <rect width="100%" height="100%" filter="url(#grain)" />
    </svg>
  );
}

export default function App() {
  return (
    <div className="relative isolate flex h-screen flex-col overflow-hidden font-['Inter',sans-serif]">
      <Wallpaper />
      <MenuBar />
      <div className="relative mt-[18px] mr-4 mb-[18px] ml-[14px] flex min-h-0 flex-1 flex-col">
        <div className="absolute -top-[15px] right-[192px] left-[129px] h-20 rounded-t-[20px] border-t-2 border-[#5c5c5c] bg-[#1e1e1e]" />
        <section className="relative flex min-h-0 flex-1 flex-col overflow-hidden rounded-[24px] bg-white shadow-[0_0_0_1px_rgba(0,0,0,0.35),0_36px_70px_rgba(0,0,0,0.65)]">
          <div className="shrink-0 bg-[#d6e1fb]">
            <TabStrip />
            <div className="rounded-t-[20px] bg-white">
              <Toolbar />
              <BookmarksBar />
            </div>
          </div>
          <LoginPage />
        </section>
      </div>
      <Dock />
    </div>
  );
}
